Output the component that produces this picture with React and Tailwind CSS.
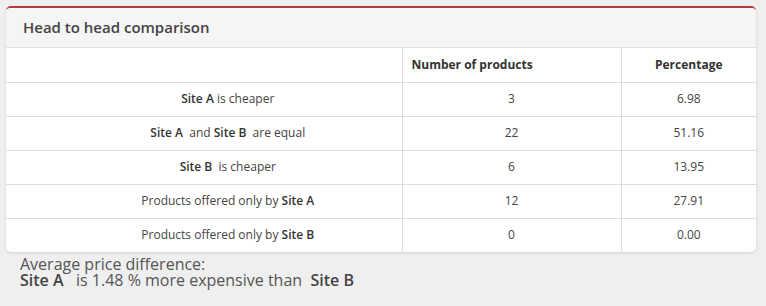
import React from 'react';

const rows = [
  { label: [['b', 'Site A'], ['t', ' is cheaper']], count: '3', pct: '6.98' },
  { label: [['b', 'Site A'], ['t', '  and '], ['b', 'Site B'], ['t', '  are equal']], count: '22', pct: '51.16' },
  { label: [['b', 'Site B'], ['t', '  is cheaper']], count: '6', pct: '13.95' },
  { label: [['t', 'Products offered only by '], ['b', 'Site A']], count: '12', pct: '27.91' },
  { label: [['t', 'Products offered only by '], ['b', 'Site B']], count: '0', pct: '0.00' },
];

const App = () => {
  return (
    <div
      className="min-h-screen w-[766px] h-[306px] bg-[#efefef] pt-[6px] pl-[6px] pr-[10px] text-[#555]"
      style={{ fontFamily: '"Open Sans", "Liberation Sans", sans-serif' }}
    >
      {/* Panel */}
      <div className="bg-white rounded-[5px] border-t-2 border-[#b8393b] shadow-[0_1px_3px_rgba(0,0,0,0.12)] overflow-hidden">
        <div className="h-[40px] bg-[#f5f5f5] border-b border-[#e2e2e2] flex items-center pl-[17px]">
          <h3 className="text-[15px] text-[#444] font-semibold leading-none">Head to head comparison</h3>
        </div>
        <table className="w-full border-collapse text-[12px] text-[#444]">
          <thead>
            <tr className="h-[34px]">
              <th className="w-[396px]"></th>
              <th className="w-[219px] border-l border-[#dedede] font-bold text-[#333] text-left pl-[9px]">Number of products</th>
              <th className="border-l border-[#dedede] font-bold text-[#333]">Percentage</th>
            </tr>
          </thead>
          <tbody>
            {rows.map((r, i) => (
              <tr key={i} className="h-[34px] border-t border-[#dedede]">
                <td className="text-center whitespace-pre pl-[48px]">
                  {r.label.map(([k, s], j) =>
                    k === 'b' ? (
                      <span key={j} className="font-semibold text-[#333]">{s}</span>
                    ) : (
                      <span key={j}>{s}</span>
                    )
                  )}
                </td>
                <td className="text-center border-l border-[#dedede]">{r.count}</td>
                <td className="text-center border-l border-[#dedede]">{r.pct}</td>
              </tr>
            ))}
          </tbody>
        </table>
      </div>

      {/* Summary */}
      <div className="pl-[14px] pt-[4px] text-[16px] leading-[16px] text-[#555]">
        <div>Average price difference:</div>
        <div className="whitespace-pre">
          <span className="font-semibold text-[#444]">Site A</span>
          {'   is 1.48 % more expensive than  '}
          <span className="font-semibold text-[#444]">Site B</span>
        </div>
      </div>
    </div>
  );
};

export default App;
